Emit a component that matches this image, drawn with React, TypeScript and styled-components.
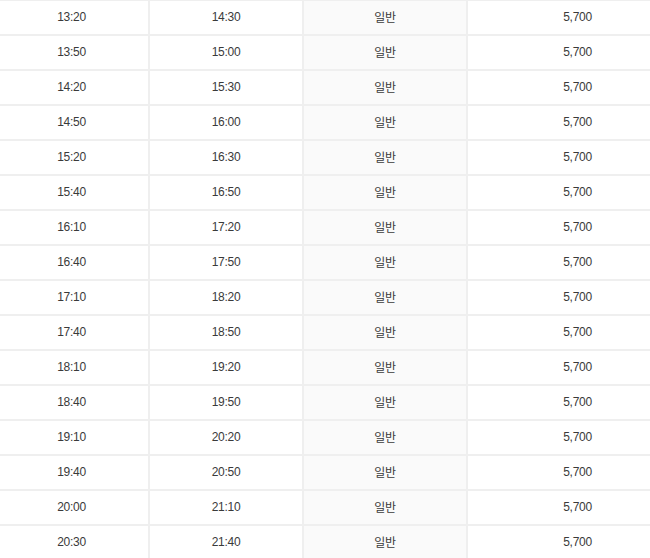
import React from "react";
import styled, { createGlobalStyle } from "styled-components";

const Global = createGlobalStyle`
  html, body { margin: 0; padding: 0; background: #fff; overflow: hidden; }
`;

const Wrap = styled.div`
  width: 650px;
  height: 558px;
  overflow: hidden;
`;

const Table = styled.table`
  margin-left: -6px;
  width: 694px;
  table-layout: fixed;
  border-collapse: separate;
  border-spacing: 0;
  font-family: "Liberation Sans", "Noto Sans CJK KR", sans-serif;
  font-size: 12px;
  color: #3a3a3a;
`;

const Col = styled.col<{ $w: number }>`
  width: ${(p) => p.$w}px;
`;

const Cell = styled.td<{ $shade?: boolean }>`
  box-sizing: border-box;
  height: 35px;
  padding: 0 0 2px;
  border: 1px solid #efefef;
  text-align: center;
  vertical-align: middle;
  background: ${(p) => (p.$shade ? "#fafafa" : "#fff")};
  letter-spacing: -0.3px;
`;

const widths = [155, 154, 164, 221];

const rows: [string, string][] = [
  ["13:20", "14:30"],
  ["13:50", "15:00"],
  ["14:20", "15:30"],
  ["14:50", "16:00"],
  ["15:20", "16:30"],
  ["15:40", "16:50"],
  ["16:10", "17:20"],
  ["16:40", "17:50"],
  ["17:10", "18:20"],
  ["17:40", "18:50"],
  ["18:10", "19:20"],
  ["18:40", "19:50"],
  ["19:10", "20:20"],
  ["19:40", "20:50"],
  ["20:00", "21:10"],
  ["20:30", "21:40"],
];

export default function App() {
  return (
    <Wrap>
      <Global />
      <Table>
        <colgroup>
          {widths.map((w, i) => (
            <Col key={i} $w={w} />
          ))}
        </colgroup>
        <tbody>
          {rows.map(([a, b]) => (
            <tr key={a}>
              <Cell>{a}</Cell>
              <Cell>{b}</Cell>
              <Cell $shade>일반</Cell>
              <Cell>5,700</Cell>
            </tr>
          ))}
        </tbody>
      </Table>
    </Wrap>
  );
}
